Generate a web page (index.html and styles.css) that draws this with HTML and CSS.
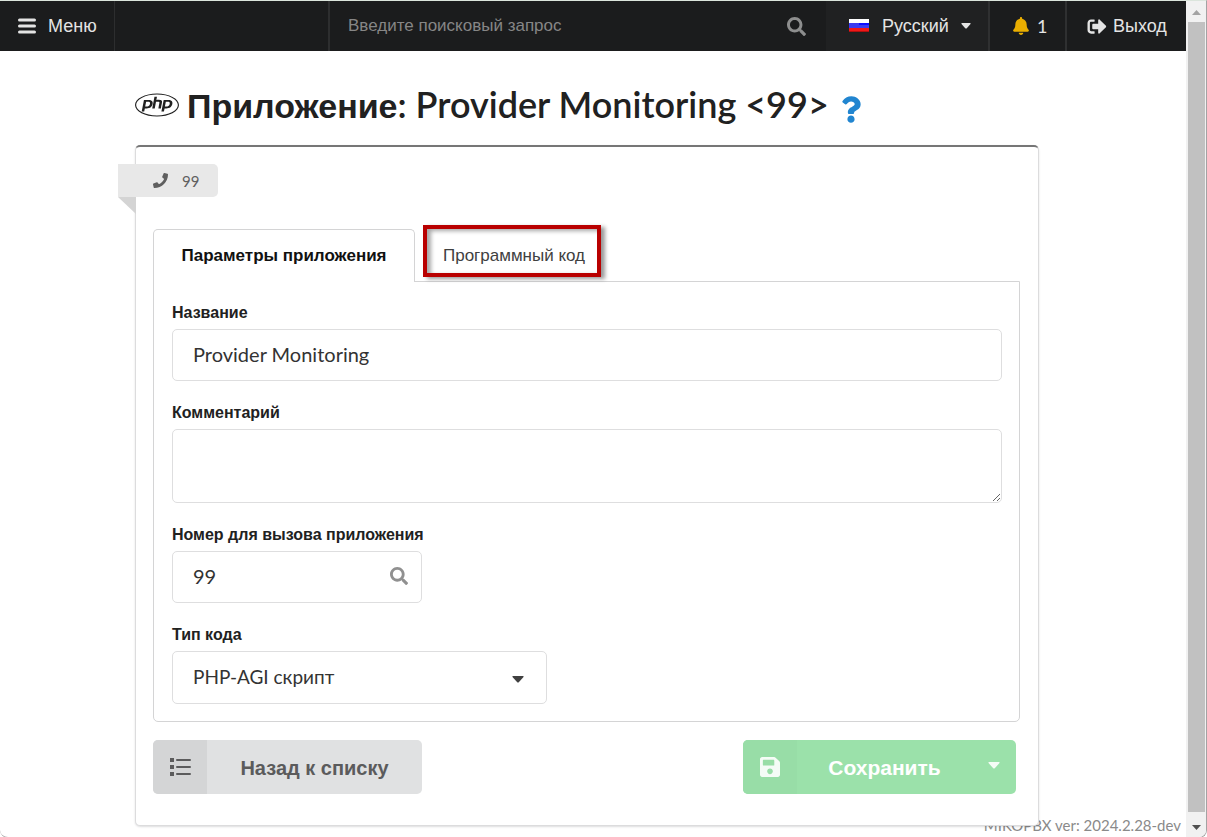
FILE: index.html
```html
<!DOCTYPE html>
<html lang="ru">
<head>
<meta charset="utf-8">
<title>Provider Monitoring</title>
<link rel="stylesheet" href="styles.css">
</head>
<body>
<div class="window">
  <div class="page">
    <nav class="topbar">
      <a class="topbar-item menu-link" href="#">
        <svg class="icon-menu" viewBox="0 0 18 16" width="18" height="16"><path d="M1.500 2h15M1.500 8h15M1.500 14h15" stroke="currentColor" stroke-width="3" stroke-linecap="round"/></svg>
        Меню
      </a>
      <div class="topbar-gap"></div>
      <div class="search">
        <input class="search-input" type="text" aria-label="Поиск" placeholder="Введите поисковый запрос">
        <svg class="search-icon" viewBox="0 0 512 512" width="19" height="19"><path fill="currentColor" d="M505 442.7L405.300 343c-4.500-4.500-10.600-7-17-7H372c27.600-35.300 44-79.700 44-128C416 93.100 322.900 0 208 0S0 93.100 0 208s93.100 208 208 208c48.300 0 92.700-16.400 128-44v16.300c0 6.400 2.500 12.500 7 17l99.700 99.700c9.400 9.400 24.600 9.400 33.900 0l28.300-28.300c9.400-9.400 9.400-24.600.1-34zM208 336c-70.700 0-128-57.200-128-128 0-70.700 57.200-128 128-128 70.700 0 128 57.200 128 128 0 70.700-57.200 128-128 128z"/></svg>
      </div>
      <button class="topbar-item language" type="button">
        <svg class="flag" viewBox="0 0 20 14" width="20" height="14"><path fill="#fff" d="M0 0h20v4H0z"/><path fill="#3a3af0" d="M0 4h20v5H0z"/><path fill="#0d0dff" d="M10 4h10v2H10z"/><path fill="#f01818" d="M0 9h20v4H0z"/><path fill="#b01010" d="M0 12h20v1H0z"/></svg>
        <span>Русский</span>
        <svg class="caret" viewBox="0 0 10 6" width="10" height="6"><path fill="currentColor" d="M1 0h8q1 0 .5 1L6 5Q5 6 4 5L.5 1Q0 0 1 0z"/></svg>
      </button>
      <a class="topbar-item alerts" href="#">
        <svg class="bell" viewBox="0 0 448 512" width="16" height="18"><path fill="currentColor" d="M224 512c35.320 0 63.970-28.650 63.970-64H160.030c0 35.350 28.650 64 63.970 64zm215.390-149.710c-19.320-20.760-55.470-51.990-55.470-154.290 0-77.700-54.480-139.900-127.940-155.160V32c0-17.670-14.320-32-31.980-32s-31.980 14.330-31.980 32v20.840C118.560 68.100 64.080 130.300 64.080 208c0 102.300-36.150 133.530-55.470 154.290-6 6.450-8.660 14.160-8.610 21.710.11 16.400 12.980 32 32.100 32h383.800c19.120 0 32-15.600 32.100-32 .05-7.550-2.610-15.270-8.610-21.710z"/></svg>
        <span class="latin">1</span>
      </a>
      <a class="topbar-item logout" href="#">
        <svg viewBox="0 0 512 512" width="20" height="19"><path fill="currentColor" d="M497 273L329 441c-15 15-41 4.500-41-17v-96H152c-13.300 0-24-10.700-24-24v-96c0-13.300 10.700-24 24-24h136V88c0-21.400 25.900-32 41-17l168 168c9.300 9.400 9.300 24.600 0 34zM192 436v-40c0-6.600-5.400-12-12-12H96c-17.700 0-32-14.300-32-32V160c0-17.700 14.300-32 32-32h84c6.600 0 12-5.400 12-12V76c0-6.600-5.400-12-12-12H96c-53 0-96 43-96 96v192c0 53 43 96 96 96h84c6.600 0 12-5.400 12-12z"/></svg>
        Выход
      </a>
    </nav>

    <main class="content">
      <h1 class="title">
        <svg class="php" viewBox="0 0 640 512" width="44" height="36"><path fill="currentColor" d="M320 104.500c171.400 0 303.200 72.200 303.200 151.500S491.300 407.500 320 407.500c-171.400 0-303.200-72.200-303.200-151.500S148.700 104.500 320 104.500m0-16.800C143.300 87.700 0 163 0 256s143.300 168.300 320 168.300S640 349 640 256 496.700 87.700 320 87.700zM218.200 242.500c-7.900 40.500-35.800 36.300-70.100 36.300l13.700-70.600c38 0 63.800-4.100 56.400 34.300zM97.400 350.300h36.700l8.700-44.800c41.100 0 66.600 3 90.200-19.100 26.100-24 32.900-66.700 14.300-88.100-9.700-11.200-25.300-16.700-46.500-16.700h-70.700L97.400 350.300zm185.700-213.600h36.500l-8.700 44.800c31.500 0 60.700-2.300 74.800 10.700 14.800 13.600 7.700 31-8.300 113.100h-37c15.400-79.400 18.300-86 12.700-92-5.400-5.800-17.700-4.600-47.400-4.600l-18.800 96.600h-36.500l32.700-168.600zM505 242.500c-8 41.100-36.700 36.300-70.100 36.300l13.700-70.600c38.200 0 63.800-4.100 56.400 34.300zM384.200 350.300H421l8.700-44.800c43.200 0 67.100 2.500 90.200-19.100 26.100-24 32.900-66.700 14.300-88.100-9.700-11.200-25.300-16.700-46.500-16.700H417l-32.800 168.700z"/></svg>
        <span class="title-text"><span class="title-kind">Приложение</span>: Provider Monitoring &lt;99&gt;</span>
        <a class="help" href="#" aria-label="Справка"><svg viewBox="0 0 384 512" width="20" height="27"><path fill="currentColor" d="M202.021 0C122.202 0 70.503 32.703 29.914 91.026c-7.363 10.580-5.093 25.086 5.178 32.874l43.138 32.709c10.373 7.865 25.132 6.026 33.253-4.148 25.049-31.381 43.630-49.449 82.757-49.449 30.764 0 68.816 19.799 68.816 49.631 0 22.552-18.617 34.134-48.993 51.164-35.423 19.860-82.299 44.576-82.299 106.405V320c0 13.255 10.745 24 24 24h72.471c13.255 0 24-10.745 24-24v-5.773c0-42.860 125.268-44.645 125.268-160.627C377.504 66.256 286.902 0 202.021 0zM192 373.459c-38.196 0-69.271 31.075-69.271 69.271 0 38.195 31.075 69.270 69.271 69.270s69.271-31.075 69.271-69.271-31.075-69.270-69.271-69.270z"/></svg></a>
      </h1>

      <section class="card">
        <div class="ribbon">
          <svg viewBox="0 0 512 512" width="15" height="15"><path fill="currentColor" d="M493.400 24.600l-104-24c-11.300-2.600-22.900 3.300-27.500 13.900l-48 112c-4.200 9.800-1.400 21.300 6.900 28l60.600 49.600c-36 76.700-98.900 140.500-177.200 177.200l-49.600-60.600c-6.800-8.300-18.200-11.100-28-6.900l-112 48C3.900 366.500-2 378.100.6 389.400l24 104C27.100 504.200 36.700 512 48 512c256.100 0 464-207.500 464-464 0-11.200-7.700-20.900-18.600-23.400z"/></svg>
          <span>99</span>
        </div>

        <form class="form">
          <div class="tabs">
            <button class="tab tab-active" type="button">Параметры приложения</button>
            <button class="tab tab-marked" type="button">Программный код</button>
          </div>
          <div class="panel">
            <div class="field">
              <label for="name">Название</label>
              <input class="control" id="name" type="text" value="Provider Monitoring">
            </div>
            <div class="field">
              <label for="comment">Комментарий</label>
              <textarea class="control comment" id="comment"></textarea>
            </div>
            <div class="field number-field">
              <label for="number">Номер для вызова приложения</label>
              <div class="with-icon">
                <input class="control" id="number" type="text" value="99">
                <svg class="number-icon" viewBox="0 0 512 512" width="18" height="18"><path fill="currentColor" d="M505 442.700L405.300 343c-4.500-4.500-10.600-7-17-7H372c27.600-35.300 44-79.700 44-128C416 93.100 322.900 0 208 0S0 93.100 0 208s93.100 208 208 208c48.300 0 92.700-16.400 128-44v16.300c0 6.400 2.500 12.500 7 17l99.700 99.700c9.400 9.400 24.600 9.400 33.900 0l28.300-28.300c9.400-9.400 9.400-24.600.1-34zM208 336c-70.700 0-128-57.200-128-128 0-70.700 57.200-128 128-128 70.700 0 128 57.200 128 128 0 70.700-57.200 128-128 128z"/></svg>
              </div>
            </div>
            <div class="field type-field">
              <label for="type">Тип кода</label>
              <div class="with-icon">
                <select class="control" id="type"><option>PHP-AGI скрипт</option></select>
                <svg class="select-caret" viewBox="0 0 12 7" width="12" height="7"><path fill="currentColor" d="M1 0h10q1 0 .5 1L7 6Q6 7 5 6L.5 1Q0 0 1 0z"/></svg>
              </div>
            </div>
          </div>

          <div class="actions">
            <button class="button back" type="button">
              <span class="button-icon"><svg viewBox="0 0 22 18" width="22" height="18"><path fill="currentColor" d="M1 0h4v4H1zM1 7h4v4H1zM1 14h4v4H1zM8 1h13q1 0 1 1t-1 1H8q-1 0-1-1t1-1zM8 8h13q1 0 1 1t-1 1H8q-1 0-1-1t1-1zM8 15h13q1 0 1 1t-1 1H8q-1 0-1-1t1-1z"/></svg></span>
              <span class="button-text">Назад к списку</span>
            </button>
            <div class="save-group">
              <button class="button save" type="submit">
                <span class="button-icon"><svg viewBox="0 32 448 448" width="20" height="20"><path fill="currentColor" d="M433.941 129.941l-83.882-83.882A48 48 0 0 0 316.118 32H48C21.490 32 0 53.490 0 80v352c0 26.510 21.490 48 48 48h352c26.510 0 48-21.490 48-48V163.882a48 48 0 0 0-14.059-33.941zM224 416c-35.346 0-64-28.654-64-64 0-35.346 28.654-64 64-64s64 28.654 64 64c0 35.346-28.654 64-64 64zm96-304.520V212c0 6.627-5.373 12-12 12H76c-6.627 0-12-5.373-12-12V108c0-6.627 5.373-12 12-12h228.520c3.183 0 6.235 1.264 8.485 3.515l3.480 3.480A11.996 11.996 0 0 1 320 111.480z"/></svg></span>
                <span class="button-text">Сохранить</span>
              </button>
              <button class="save-more" type="button" aria-label="Другие действия"><svg viewBox="0 0 12 7" width="12" height="7"><path fill="currentColor" d="M1 0h10q1 0 .5 1L7 6Q6 7 5 6L.5 1Q0 0 1 0z"/></svg></button>
            </div>
          </div>
        </form>
      </section>
    </main>
    <footer class="version">MIKOPBX ver: 2024.2.28-dev</footer>
  </div>

  <div class="scrollbar" aria-hidden="true">
    <svg class="arrow-up" viewBox="0 0 9 5" width="9" height="5"><path fill="currentColor" d="M4.500 0L9 5H0z"/></svg>
    <div class="thumb"></div>
    <svg class="arrow-down" viewBox="0 0 9 5" width="9" height="5"><path fill="currentColor" d="M0 0h9L4.500 5z"/></svg>
  </div>
</div>
</body>
</html>
```
FILE: styles.css
```css
* { box-sizing: border-box; }

body {
  margin: 0;
  background: #fff;
  color: #212121;
  font-family: "Liberation Sans", Arial, sans-serif;
  font-size: 18px;
}

button, input, select, textarea { font: inherit; color: inherit; }
svg { display: block; flex: none; }

.window {
  display: flex;
  min-height: 100vh;
  border: solid #a3a3a3;
  border-width: 0 1px 1px 0;
  border-top: 1px solid #dbe5dc;
  border-radius: 0 0 8px 8px;
  overflow: hidden;
}

.page { flex: 1; position: relative; display: flex; flex-direction: column; min-width: 0; }

/* Top bar */
.topbar { display: flex; height: 50px; background: #1b1c1d; color: #e4e4e4; }
.topbar-item {
  display: flex;
  align-items: center;
  padding: 0;
  border: 0;
  background: none;
  color: inherit;
  text-decoration: none;
}
.menu-link { width: 115px; padding-left: 18px; gap: 12px; border-right: 1px solid #2d2e2f; }
.topbar-gap { width: 215px; border-right: 2px solid #2d2e2f; }
.search { flex: 1; display: flex; align-items: center; padding: 0 20px 0 18px; }
.search-input { flex: 1; min-width: 0; padding: 0; border: 0; outline: 0; background: none; font-size: 17px; }
.search-input::placeholder { color: #868686; opacity: 1; }
.search-icon { color: #8d8e8e; }
.language { width: 164px; padding-left: 23px; background: #202122; border-right: 2px solid #2f3031; }
.language .caret { margin-left: 12px; }
.flag { margin-right: 13px; }
.alerts { width: 77px; padding-left: 23px; gap: 8px; border-right: 2px solid #2f3031; }
.bell { color: #eaae00; }
.latin { font-family: Lato, sans-serif; }
.logout { width: 119px; padding-left: 20px; gap: 6px; }

/* Heading */
.content { padding: 34px 147px 11px 135px; }
.title {
  display: flex;
  align-items: center;
  height: 40px;
  margin: 0 0 20px;
  font-family: Lato, sans-serif;
  font-size: 36px;
  font-weight: 600;
  line-height: 40px;
}
.title-text { margin-left: 8px; white-space: nowrap; }
.title-kind { font-family: "Liberation Sans", Arial, sans-serif; font-size: 34px; font-weight: 700; }
.help { margin: 8px 0 0 12px; color: #2185d0; }

/* Card */
.card {
  position: relative;
  z-index: 1;
  padding: 17px 18px 31px 17px;
  background: #fff;
  border: 1px solid #dcdcdd;
  border-top: 2px solid #767676;
  border-radius: 5px;
  box-shadow: 0 1px 2px rgba(34, 36, 38, .15);
}
.ribbon {
  position: relative;
  display: flex;
  align-items: center;
  gap: 14px;
  width: 100px;
  height: 33px;
  margin-left: -35px;
  padding-left: 35px;
  border-radius: 0 5px 5px 0;
  background: #e8e8e8;
  color: #5f5f5f;
  font-family: Lato, sans-serif;
  font-size: 15px;
}
.ribbon::after {
  content: "";
  position: absolute;
  top: 100%;
  left: 0;
  border: solid transparent;
  border-width: 0 18px 17px 0;
  border-right-color: #d4d4d4;
}
.form { margin-top: 32px; }

/* Tabs */
.tabs { display: flex; position: relative; height: 53px; margin-bottom: -1px; }
.tab { padding: 0; border: 0; background: #fff; color: #404040; font-size: 17px; white-space: nowrap; }
.tab-active {
  width: 262px;
  border: 1px solid #d4d4d5;
  border-bottom: 0;
  border-radius: 5px 5px 0 0;
  color: #111;
  font-weight: 700;
}
.tab-marked {
  width: 178px;
  height: 52px;
  margin: -4px 0 0 8px;
  padding: 10px 0 0 4px;
  border: 4px solid #b90000;
  box-shadow: 4px 2px 4px rgba(0, 0, 0, .4), inset 4px 2px 4px rgba(0, 0, 0, .35);
}

.panel {
  display: flex;
  flex-direction: column;
  gap: 22px;
  padding: 21px 17px 17px 18px;
  border: 1px solid #d4d4d5;
  border-radius: 0 0 5px 5px;
}

/* Fields */
.field { display: flex; flex-direction: column; gap: 6px; }
.field label { font-size: 16px; font-weight: 700; line-height: 20px; white-space: nowrap; }
.control {
  display: block;
  width: 100%;
  height: 52px;
  padding: 0 20px 2px;
  border: 1px solid #dededf;
  border-radius: 5px;
  outline: 0;
  background: #fff;
  color: #333;
  font-family: Lato, "Liberation Sans", sans-serif;
  font-size: 20px;
}
.comment { height: 74px; resize: vertical; }
.number-field { width: 250px; }
.type-field { width: 375px; }
.with-icon { position: relative; }
.number-icon { position: absolute; top: 16px; right: 14px; color: #909090; }
select.control { height: 53px; font-size: 19px; appearance: none; }
.select-caret { position: absolute; top: 25px; right: 23px; color: #404040; pointer-events: none; }

/* Buttons */
.actions { display: flex; justify-content: space-between; padding: 18px 4px 0 0; }
.button {
  display: flex;
  height: 54px;
  padding: 0;
  border: 0;
  border-radius: 5px;
  overflow: hidden;
  font-size: 20px;
  font-weight: 700;
}
.button-icon { display: flex; align-items: center; justify-content: center; width: 54px; height: 100%; }
.button-text { flex: 1; align-self: center; padding-top: 2px; }
.back { width: 269px; background: #e0e1e2; color: #5b5b5c; }
.back .button-icon { background: #d4d5d6; }
.save-group { display: flex; width: 273px; border-radius: 5px; background: #9be1aa; color: #fff; }
.save { flex: 1; background: none; font-size: 21px; }
.save .button-icon { background: #98dda7; }
.save-more { display: flex; width: 44px; padding: 22px 0 0 16px; border: 0; background: none; }
.save-group svg { opacity: .9; }

.version {
  position: absolute;
  right: 5px;
  bottom: 2px;
  color: #8a8a8a;
  font-family: Lato, sans-serif;
  font-size: 15px;
  line-height: 20px;
}

/* Scrollbar */
.scrollbar {
  display: flex;
  flex-direction: column;
  align-items: center;
  width: 20px;
  padding: 9px 1px 7px 2px;
  background: #f1f1f1;
}
.arrow-up { color: #a3a3a3; }
.thumb { flex: 1; align-self: stretch; margin: 7px 0 13px; background: #c1c1c1; }
.arrow-down { color: #505050; }
```
